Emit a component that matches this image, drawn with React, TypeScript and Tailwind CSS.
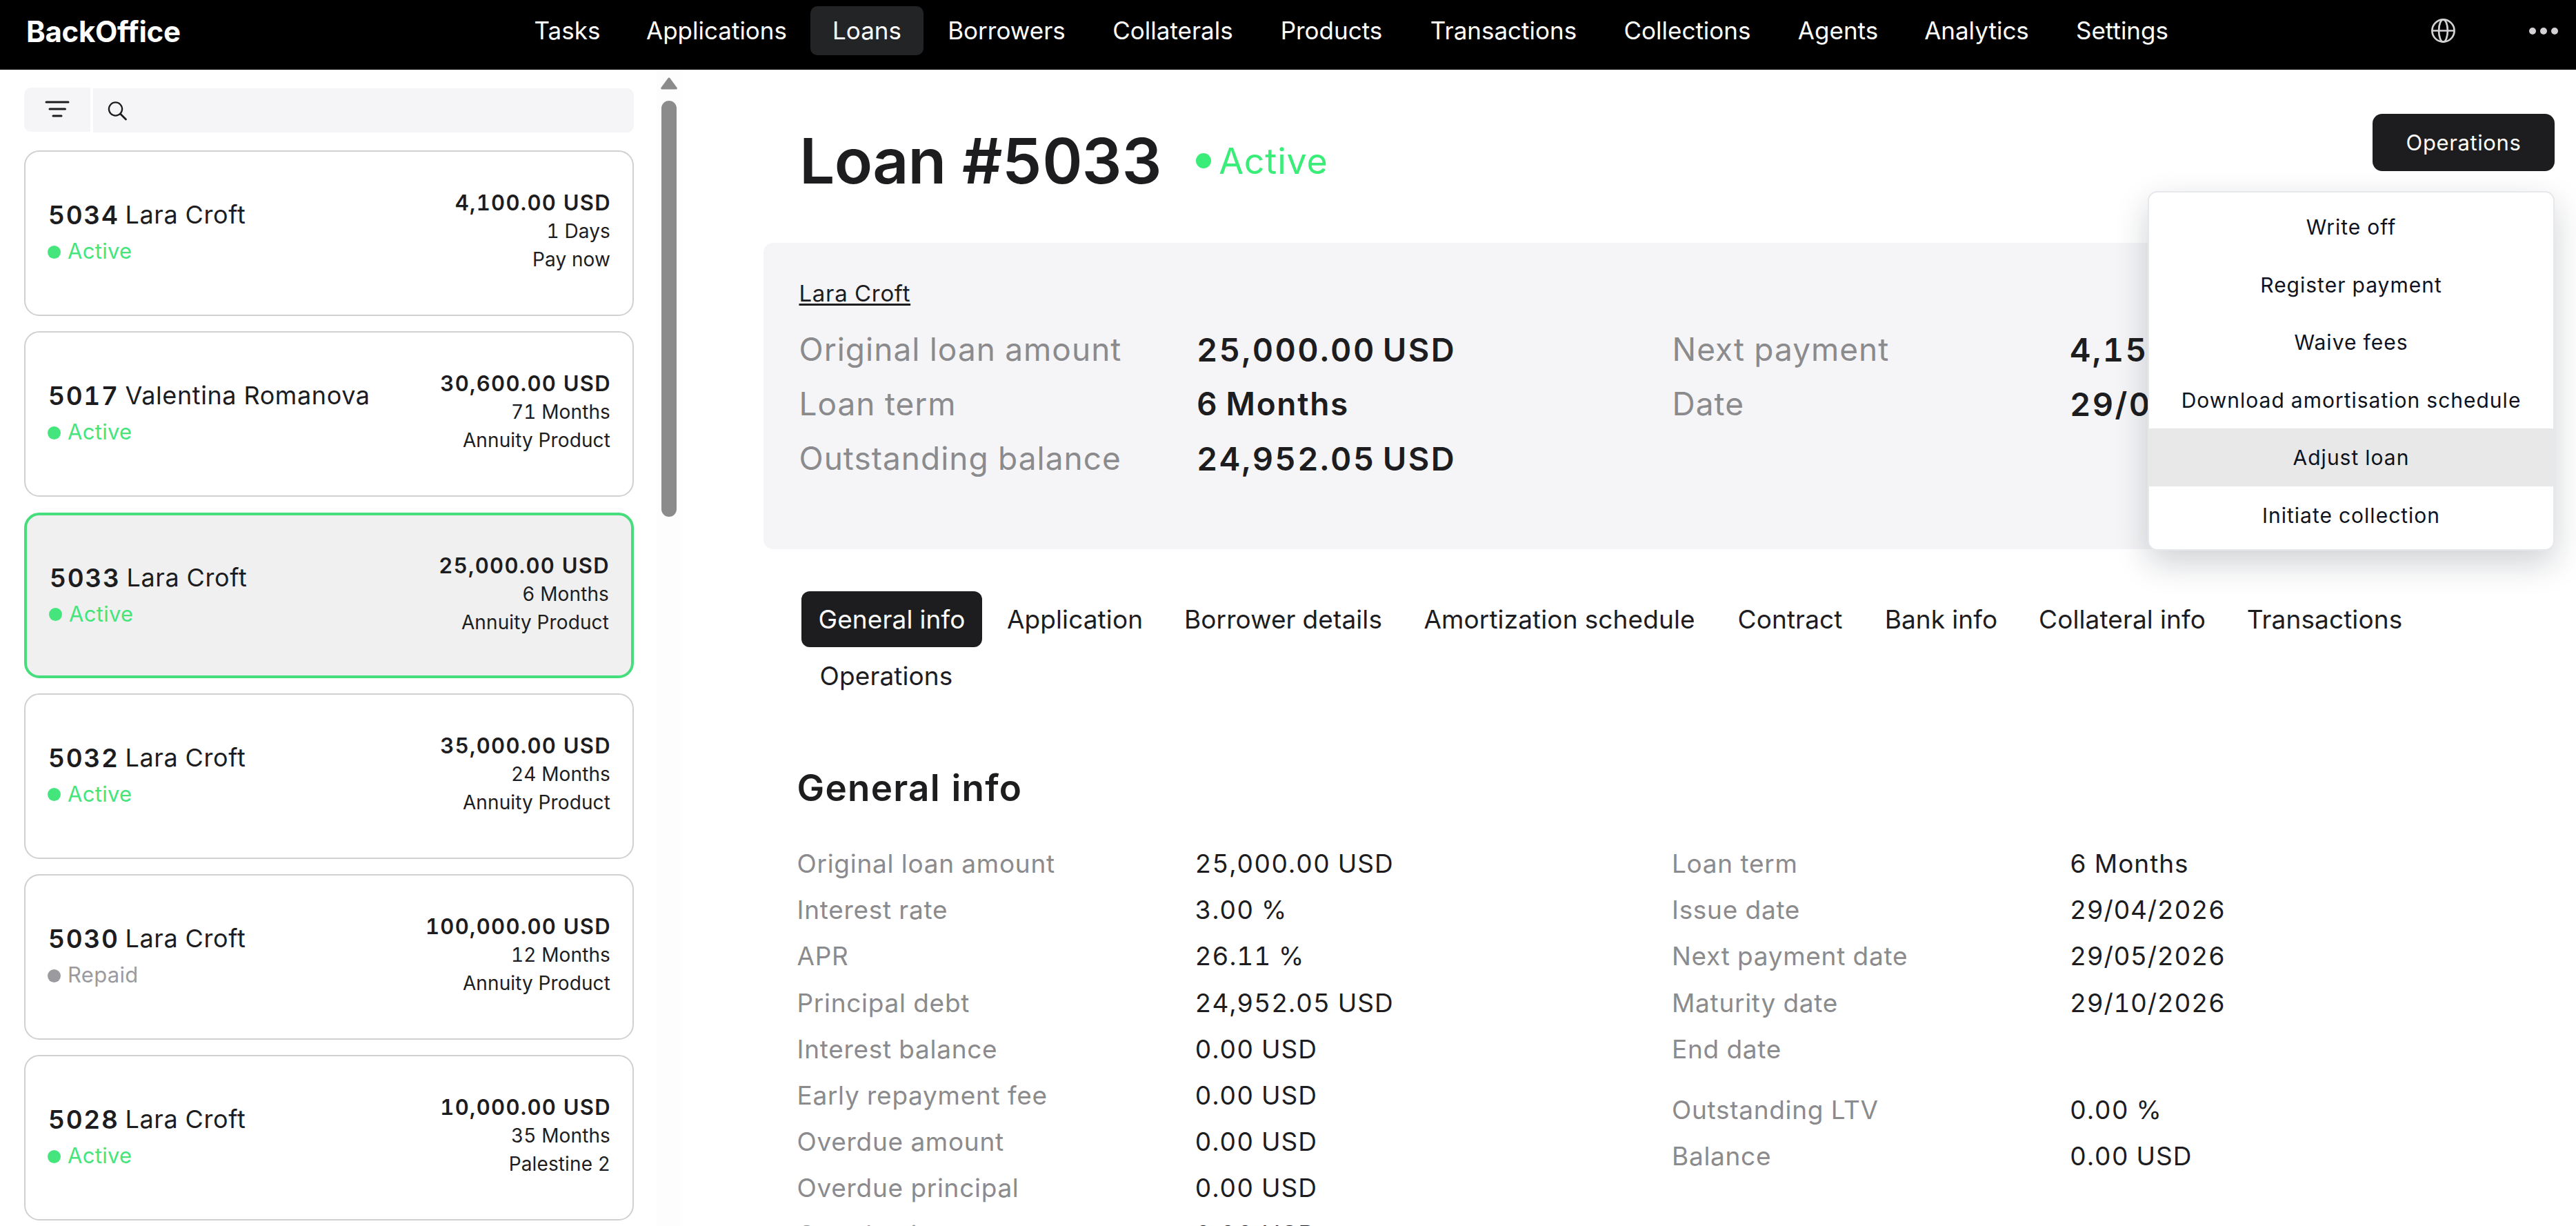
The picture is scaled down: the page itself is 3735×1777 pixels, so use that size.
type NavItem = { label: string; width: string; active?: boolean };

const NAV: NavItem[] = [
  { label: "Tasks", width: "w-[161px]" },
  { label: "Applications", width: "w-[272px]" },
  { label: "Loans", width: "w-[164px]", active: true },
  { label: "Borrowers", width: "w-[241px]" },
  { label: "Collaterals", width: "w-[241px]" },
  { label: "Products", width: "w-[219px]" },
  { label: "Transactions", width: "w-[280px]" },
  { label: "Collections", width: "w-[253px]" },
  { label: "Agents", width: "w-[184px]" },
  { label: "Analytics", width: "w-[218px]" },
  { label: "Settings", width: "w-[204px]" },
];

type Loan = {
  id: string;
  name: string;
  status: "Active" | "Repaid";
  amount: string;
  term: string;
  product: string;
  selected?: boolean;
};

const LOANS: Loan[] = [
  { id: "5034", name: "Lara Croft", status: "Active", amount: "4,100.00 USD", term: "1 Days", product: "Pay now" },
  { id: "5017", name: "Valentina Romanova", status: "Active", amount: "30,600.00 USD", term: "71 Months", product: "Annuity Product" },
  { id: "5033", name: "Lara Croft", status: "Active", amount: "25,000.00 USD", term: "6 Months", product: "Annuity Product", selected: true },
  { id: "5032", name: "Lara Croft", status: "Active", amount: "35,000.00 USD", term: "24 Months", product: "Annuity Product" },
  { id: "5030", name: "Lara Croft", status: "Repaid", amount: "100,000.00 USD", term: "12 Months", product: "Annuity Product" },
  { id: "5028", name: "Lara Croft", status: "Active", amount: "10,000.00 USD", term: "35 Months", product: "Palestine 2" },
];

const MENU = [
  "Write off",
  "Register payment",
  "Waive fees",
  "Download amortisation schedule",
  "Adjust loan",
  "Initiate collection",
];

const TABS = [
  { label: "General info", width: "w-[262px] mr-1.5", active: true },
  { label: "Application", width: "w-[257px]" },
  { label: "Borrower details", width: "w-[347px]" },
  { label: "Amortization schedule", width: "w-[454px]" },
  { label: "Contract", width: "w-[215px]" },
  { label: "Bank info", width: "w-[223px]" },
  { label: "Collateral info", width: "w-[302px]" },
  { label: "Transactions", width: "w-[285px]" },
  { label: "Operations", width: "w-[246px]" },
];

const DETAILS_LEFT = [
  ["Original loan amount", "25,000.00 USD"],
  ["Interest rate", "3.00 %"],
  ["APR", "26.11 %"],
  ["Principal debt", "24,952.05 USD"],
  ["Interest balance", "0.00 USD"],
  ["Early repayment fee", "0.00 USD"],
  ["Overdue amount", "0.00 USD"],
  ["Overdue principal", "0.00 USD"],
  ["Overdue interest", "0.00 USD"],
];

const DATES = [
  ["Loan term", "6 Months"],
  ["Issue date", "29/04/2026"],
  ["Next payment date", "29/05/2026"],
  ["Maturity date", "29/10/2026"],
  ["End date", ""],
];

const BALANCES = [
  ["Outstanding LTV", "0.00 %"],
  ["Balance", "0.00 USD"],
];

function TopBar() {
  return (
    <header className="flex h-[101px] shrink-0 items-start bg-black text-white">
      <div className="w-[742px] pl-[38px] text-[42px] leading-[92px] font-bold tracking-[-0.3px]">BackOffice</div>
      <nav className="flex pt-[9px]">
        {NAV.map((n) => (
          <a
            key={n.label}
            className={`${n.width} h-[71px] rounded-[10px] text-center text-[35px] leading-[71px] font-[420] ${n.active ? "bg-[#232426]" : ""}`}
          >
            {n.label}
          </a>
        ))}
      </nav>
      <div className="ml-auto flex items-center gap-[107px] pt-[27px] pr-[26px] text-[#d3d1d3]">
        <svg className="size-[35px]" viewBox="0 0 35 35" fill="none" stroke="currentColor" strokeWidth="2.7">
          <circle cx="17.5" cy="17.5" r="16.1" />
          <ellipse cx="17.5" cy="17.5" rx="6.4" ry="16.1" />
          <path d="M1.5 17.5h32" />
        </svg>
        <div className="flex gap-1.5">
          <i className="size-[10px] rounded-full bg-current" />
          <i className="size-[10px] rounded-full bg-current" />
          <i className="size-[10px] rounded-full bg-current" />
        </div>
      </div>
    </header>
  );
}

function LoanCard({ loan }: { loan: Loan }) {
  const active = loan.status === "Active";
  return (
    <div
      className={`flex h-[240px] shrink-0 justify-between rounded-[22px] px-8 ${
        loan.selected ? "border-4 border-[#46dd7c] bg-[#f0f0f0] pt-[1px]" : "border-2 border-[#d0d0d2] pt-[2px]"
      }`}
    >
      <div className="pt-[63px]">
        <div className="flex gap-[9px] pl-px text-[36px] leading-[53px]">
          <span className="text-[37px] font-semibold tracking-[1.7px]">{loan.id}</span>
          <span className="tracking-[0.6px]">{loan.name}</span>
        </div>
        <div
          className={`-mt-px flex items-center gap-[10px] text-[31px] leading-[53px] tracking-[0.3px] ${
            active ? "text-[#45e57d]" : "text-[#9b9b9f]"
          }`}
        >
          <i className="mt-[3px] size-[19px] rounded-full bg-current" />
          {loan.status}
        </div>
      </div>
      <div className="pt-[51px] text-right text-[28px] leading-[41px] tracking-[0.12px]">
        <div className="-mr-px text-[31px] leading-[42px] font-semibold tracking-[1.3px]">{loan.amount}</div>
        <div>{loan.term}</div>
        <div>{loan.product}</div>
      </div>
    </div>
  );
}

function Sidebar() {
  return (
    <aside className="w-[919px] shrink-0 pt-[26px] pl-[35px]">
      <div className="flex gap-[4px]">
        <button className="flex h-[64px] w-[96px] items-center justify-center rounded-l-[10px] bg-[#f5f5f7]">
          <svg className="size-[36px]" viewBox="0 0 36 36" stroke="#1d1d1f" strokeWidth="3" strokeLinecap="round">
            <path d="M2 7h32M7 17h22.5M12 27h12" />
          </svg>
        </button>
        <div className="mt-px flex h-[64px] flex-1 items-center rounded-r-[10px] bg-[#f5f5f7] pl-[21px]">
          <svg className="mt-[2px] size-[30px]" viewBox="0 0 30 30" fill="none" stroke="#1d1d1f" strokeWidth="2.3" strokeLinecap="round">
            <circle cx="11.5" cy="12" r="9.6" />
            <path d="M18.5 19l8 8" strokeWidth="2.8" />
          </svg>
        </div>
      </div>
      <div className="mt-[26px] flex flex-col gap-[22.3px]">
        {LOANS.map((l) => (
          <LoanCard key={l.id} loan={l} />
        ))}
      </div>
    </aside>
  );
}

function Scrollbar() {
  return (
    <div className="ml-[33px] flex w-[36px] shrink-0 flex-col items-center bg-[#fdfdfd] pt-[11px]">
      <svg className="h-[18px] w-[24px]" viewBox="0 0 24 18" fill="#8b8b8b" stroke="#8b8b8b" strokeWidth="3" strokeLinejoin="round">
        <path d="M12 2l10.3 14H1.7z" />
      </svg>
      <div className="mt-[16px] h-[603px] w-[22px] rounded-full bg-[#8b8b8b]" />
    </div>
  );
}

function OperationsMenu() {
  return (
    <div className="absolute top-[112px] right-0 z-10 h-[521px] w-[590px] rounded-[14px] border-2 border-[#e7e8eb] bg-white pt-[8px] text-center text-[30px] leading-[81.5px] tracking-[1px] text-[#0f1320] shadow-[0_18px_48px_rgba(15,23,42,0.2)]">
      {MENU.map((m) => (
        <div key={m} className={`pt-[2px] whitespace-nowrap ${m === "Adjust loan" ? "bg-[#e8e8e8]" : ""}`}>
          {m}
        </div>
      ))}
    </div>
  );
}

function SummaryRow({ label, value }: { label: string; value: string }) {
  const amount = !value.includes("Months");
  return (
    <div className="flex text-[46px] leading-[79px] whitespace-nowrap">
      <span className="w-[576.5px] shrink-0 tracking-[1px] text-[#8b8b8d]">{label}</span>
      <span
        className={`font-semibold ${
          amount ? "text-[47px] tracking-[2.4px] [word-spacing:-5px]" : "tracking-[1.7px] [word-spacing:-3px]"
        }`}
      >
        {value}
      </span>
    </div>
  );
}

function DetailRows({ rows }: { rows: string[][] }) {
  return (
    <>
      {rows.map(([label, value]) => (
        <div key={label} className="flex h-[67.2px] text-[37px] leading-[67.2px] whitespace-nowrap">
          <span className="w-[577px] shrink-0 tracking-[0.7px] text-[#8b8b8d]">{label}</span>
          <span className={value.includes("/") ? "tracking-[0.7px]" : "tracking-[0.95px]"}>{value}</span>
        </div>
      ))}
    </>
  );
}

function LoanPage() {
  return (
    <main className="ml-[119px] w-[2597px] shrink-0">
      <div className="flex h-[251px] items-start justify-between">
        <div className="flex items-center pt-[76px] pl-[52px] leading-[110px]">
          <h1 className="text-[91px] font-semibold tracking-[-0.8px]">Loan #5033</h1>
          <div className="ml-[49px] flex items-center gap-[11px] text-[52px] tracking-[0.8px] text-[#3aed78]">
            <i className="size-[22px] rounded-full bg-current" />
            <span className="pt-[2px]">Active</span>
          </div>
        </div>
        <div className="relative mt-[64px]">
          <button className="h-[83px] w-[264px] rounded-[14px] bg-[#1d1d1f] pt-[2px] text-[31px] tracking-[0.6px] text-white">
            Operations
          </button>
          <OperationsMenu />
        </div>
      </div>

      <section className="h-[444px] rounded-[14px] bg-[#f5f5f7] pt-[48px] pl-[51.5px]">
        <a className="block text-[33px] leading-[50px] tracking-[0.7px] underline decoration-[3px] underline-offset-[3px]">
          Lara Croft
        </a>
        <div className="mt-[17px] flex">
          <div className="w-[1266px]">
            <SummaryRow label="Original loan amount" value="25,000.00 USD" />
            <SummaryRow label="Loan term" value="6 Months" />
            <SummaryRow label="Outstanding balance" value="24,952.05 USD" />
          </div>
          <div>
            <SummaryRow label="Next payment" value="4,15" />
            <SummaryRow label="Date" value="29/0" />
          </div>
        </div>
      </section>

      <div className="mt-[61px] flex flex-wrap gap-y-px pl-[55px]">
        {TABS.map((t) => (
          <a
            key={t.label}
            className={`${t.width} h-[81px] rounded-[12px] text-center text-[37px] leading-[81px] tracking-[0.1px] ${
              t.active ? "bg-[#1d1d1f] text-white" : ""
            }`}
          >
            {t.label}
          </a>
        ))}
      </div>

      <section className="pt-[92px] pl-[48.5px]">
        <h2 className="text-[53px] leading-[60px] font-semibold tracking-[1.25px]">General info</h2>
        <div className="mt-[46px] flex">
          <div className="w-[1268.5px]">
            <DetailRows rows={DETAILS_LEFT} />
          </div>
          <div>
            <DetailRows rows={DATES} />
            <div className="mt-[21px]">
              <DetailRows rows={BALANCES} />
            </div>
          </div>
        </div>
      </section>
    </main>
  );
}

export default function App() {
  return (
    <div className="flex h-[1777px] w-[3735px] flex-col overflow-hidden bg-white font-['Inter',sans-serif] text-[#1d1d1f] tabular-nums">
      <TopBar />
      <div className="flex min-h-0 flex-1 overflow-hidden">
        <Sidebar />
        <Scrollbar />
        <LoanPage />
      </div>
    </div>
  );
}
